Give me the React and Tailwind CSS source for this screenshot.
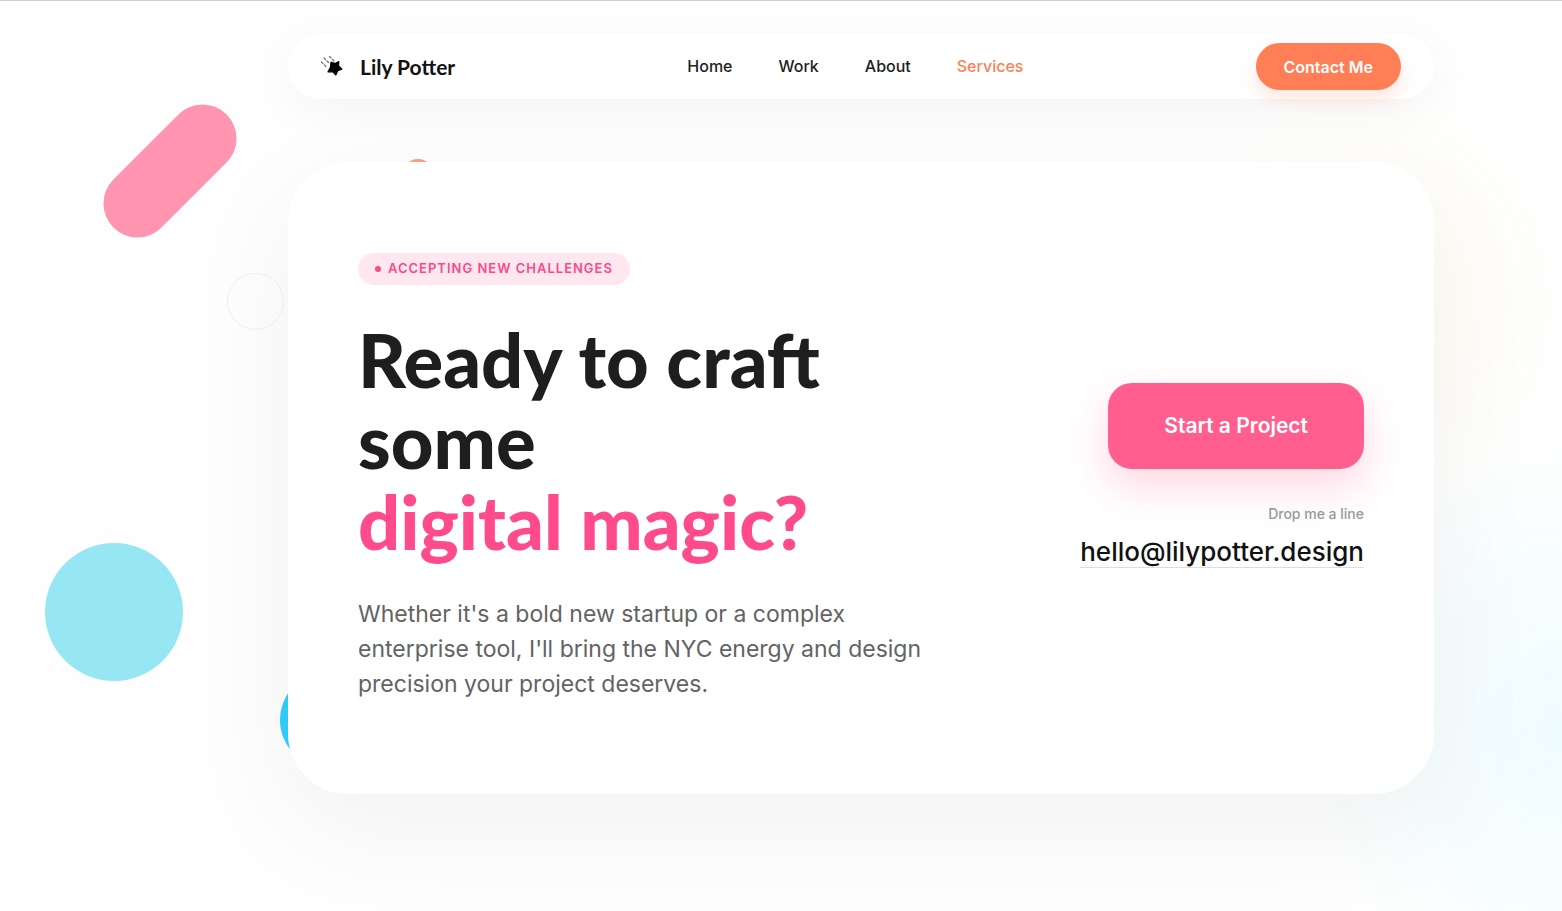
const navLinks = [
  { label: "Home", href: "#home" },
  { label: "Work", href: "#work" },
  { label: "About", href: "#about" },
  { label: "Services", href: "#services", active: true },
];

const ShootingStar = () => (
  <svg viewBox="0 0 24 24" className="w-6 h-6" aria-hidden="true">
    <path
      d="M11 7 L15 8.6 L18.8 6.6 L18.6 11 L21.9 14.2 L17.8 15.6 L15.8 20 L13 16.8 L8 16.8 L10.4 12.4 Z"
      fill="#000"
      stroke="#000"
      strokeWidth="1.2"
      strokeLinejoin="round"
    />
    <g stroke="#777" strokeWidth="1.3" strokeLinecap="round" strokeDasharray="2.2 2">
      <path d="M9.5 1.5 L14 6" />
      <path d="M4 3 L8.5 7.5" />
      <path d="M1.5 7 L6 11.8" />
    </g>
  </svg>
);

const Backdrop = () => (
  <div className="absolute inset-0 overflow-hidden pointer-events-none" aria-hidden="true">
    <div className="absolute right-0 top-20 w-[380px] h-[440px] bg-[radial-gradient(closest-side,#fffcf2,transparent)]" />
    <div className="absolute -right-[260px] top-[440px] w-[520px] h-[580px] bg-[radial-gradient(closest-side,#effcff,transparent)]" />
    <div className="absolute left-[90px] top-[136px] w-40 h-[68px] rounded-full bg-[#ff95b1] -rotate-45" />
    <div className="absolute left-[45px] top-[542px] size-[138px] rounded-full bg-[#97e6f4]" />
    <div className="absolute left-[402px] top-[158px] size-8 rounded-full bg-[#ff9d80]" />
    <div className="absolute left-[280px] top-[671px] size-24 rounded-full bg-[#2fd0fb]" />
  </div>
);

const Navbar = () => (
  <header className="flex items-center justify-between h-[65px] pl-8 pr-[33px] rounded-full bg-white shadow-[0_12px_46px_rgba(0,0,0,0.04)]">
    <a href="#home" className="flex items-center gap-4 text-[#111]">
      <ShootingStar />
      <span className="font-['Lato'] text-[21px] font-bold">Lily Potter</span>
    </a>
    <nav className="flex gap-[46px] pb-0.5">
      {navLinks.map((link) => (
        <a
          key={link.label}
          href={link.href}
          className={`text-base font-medium ${link.active ? "text-[#ff7e55]" : "text-[#1e1e1e]"}`}
        >
          {link.label}
        </a>
      ))}
    </nav>
    <button className="h-[47px] px-7 rounded-full bg-[#ff7e55] text-base font-semibold text-white shadow-[0_9px_18px_rgba(255,126,85,0.2)]">
      Contact Me
    </button>
  </header>
);

const ContactCard = () => (
  <section className="relative flex items-center justify-between mt-[63px] px-[70px] pt-[91px] pb-[92px] rounded-[60px] bg-white shadow-[0_34px_115px_rgba(0,0,0,0.05)]">
    <div className="max-w-[600px]">
      <p className="inline-flex items-center gap-[7px] h-8 px-[17px] rounded-full bg-[#ffe7f0] text-[13px] font-semibold tracking-[1px] text-[#f94b89]">
        <span className="size-[6px] rounded-full bg-[#f94b89]" />
        ACCEPTING NEW CHALLENGES
      </p>
      <h1 className="mt-[34px] font-['Lato'] text-[74px] leading-[81px] font-black text-[#1e1e1e]">
        Ready to craft some
        <span className="block text-[#ff4b8b]">digital magic?</span>
      </h1>
      <p className="mt-[35px] text-[23px] leading-[35px] text-[#636363]">
        Whether it's a bold new startup or a complex enterprise tool, I'll bring the NYC energy and design precision
        your project deserves.
      </p>
    </div>

    <div className="flex flex-col items-end">
      <button className="h-[86px] px-14 rounded-3xl bg-[#ff5e8e] text-[21px] font-semibold text-white shadow-[0_17px_40px_rgba(255,94,142,0.25)]">
        Start a Project
      </button>
      <p className="mt-[35px] text-sm font-medium text-[#999]">Drop me a line</p>
      <a
        href="mailto:hello@lilypotter.design"
        className="mt-3 mb-1 border-b border-[#ddd] text-[26px] leading-[31px] font-medium text-[#111]"
      >
        hello@lilypotter.design
      </a>
    </div>
  </section>
);

export default function App() {
  return (
    <div className="relative min-h-screen overflow-hidden border-t border-[#cfcfcf] bg-[#fefefe] font-['Inter',sans-serif]">
      <Backdrop />
      <main className="relative pl-[288px] pr-32 pt-[33px] pb-[116px]">
        <Navbar />
        <ContactCard />
      </main>
      <div className="absolute left-[227px] top-[272px] size-[57px] rounded-full border border-[#eeeeee]" />
    </div>
  );
}
